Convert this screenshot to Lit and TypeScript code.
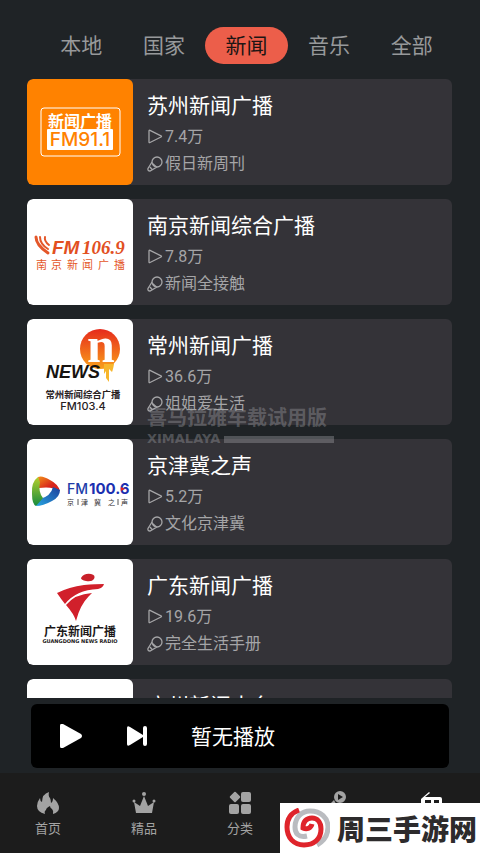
import { LitElement, html, css, svg, nothing, type TemplateResult } from "lit";
import { customElement, state } from "lit/decorators.js";
import { classMap } from "lit/directives/class-map.js";

interface Station {
  name: string;
  plays?: string;
  show?: string;
  logo: string;
}

const TABS = ["本地", "国家", "新闻", "音乐", "全部"];

const STATIONS: Station[] = [
  { name: "苏州新闻广播", plays: "7.4万", show: "假日新周刊", logo: "suzhou" },
  { name: "南京新闻综合广播", plays: "7.8万", show: "新闻全接触", logo: "nanjing" },
  { name: "常州新闻广播", plays: "36.6万", show: "姐姐爱生活", logo: "changzhou" },
  { name: "京津冀之声", plays: "5.2万", show: "文化京津冀", logo: "jingjinji" },
  { name: "广东新闻广播", plays: "19.6万", show: "完全生活手册", logo: "guangdong" },
  { name: "广州新闻电台", logo: "blank" },
];

const LOGOS: Record<string, TemplateResult> = {
  suzhou: svg`
    <rect width="106" height="106" fill="#ff8200"/>
    <rect x="14" y="29" width="79" height="48" rx="3" fill="none" stroke="#fff"/>
    <text class="cjk heavy" x="53" y="48" font-size="16" text-anchor="middle" fill="#fff">新闻广播</text>
    <rect x="20" y="50" width="66" height="21" rx="1" fill="#fff"/>
    <text class="inter medium" x="53" y="67" font-size="19" text-anchor="middle" fill="#ff8200">FM91.1</text>`,
  nanjing: svg`
    <rect width="106" height="106" fill="#fff"/>
    <g fill="none" stroke="#e4572a" stroke-linecap="round">
      <path d="M9 38q0 8 12 16" stroke-width="3"/>
      <path d="M13 38q0 7 8 12" stroke-width="2"/>
      <path d="M18 38q-1 4 4 8" stroke-width="2"/>
    </g>
    <text class="sans heavy italic" x="25" y="55" font-size="19" fill="#e2501f">FM</text>
    <text class="serif heavy italic" x="55" y="55" font-size="19" fill="#e2501f">106.9</text>
    <text class="cjk" y="70" font-size="11" fill="#e4572a"><tspan x="9">南</tspan><tspan x="24">京</tspan><tspan x="40">新</tspan><tspan x="55">闻</tspan><tspan x="71">广</tspan><tspan x="87">播</tspan></text>`,
  changzhou: svg`
    <defs>
      <linearGradient id="sun" x1="0" y1="0" x2="0" y2="1">
        <stop offset="0" stop-color="#e62a1c"/><stop offset="1" stop-color="#f9a01b"/>
      </linearGradient>
    </defs>
    <rect width="106" height="106" fill="#fff"/>
    <circle cx="73" cy="30" r="20" fill="url(#sun)"/>
    <text class="serif heavy" x="60" y="43" font-size="50" fill="#fff">n</text>
    <path d="M77 45h10q-1 6-2 8l-3-3v13l-3-4v-7l-2 3z" fill="#f7b62c"/>
    <text class="sans heavy italic" x="19" y="59" font-size="18" fill="#171310">NEWS</text>
    <text class="cjk heavy" x="56" y="79" font-size="9.400" text-anchor="middle" fill="#27211f">常州新闻综合广播</text>
    <text class="inter medium" x="56" y="91" font-size="11" text-anchor="middle" fill="#27211f">FM103.4</text>`,
  jingjinji: svg`
    <defs>
      <linearGradient id="tri-red" x1="0" y1="0" x2="1" y2="1">
        <stop offset="0" stop-color="#f29018"/><stop offset=".6" stop-color="#d8251c"/>
      </linearGradient>
      <linearGradient id="tri-blue" x1="1" y1="0" x2="0" y2="1">
        <stop offset="0" stop-color="#1c3f9c"/><stop offset="1" stop-color="#27a5e0"/>
      </linearGradient>
      <linearGradient id="tri-green" x1="0" y1="0" x2="0" y2="1">
        <stop offset="0" stop-color="#b4cf2c"/><stop offset="1" stop-color="#168a3d"/>
      </linearGradient>
    </defs>
    <rect width="106" height="106" fill="#fff"/>
    <path d="M11 38q4-2 12 3 8 4 10 11-8-5-21-3z" fill="url(#tri-red)"/>
    <path d="M33 51q0 7-8 11-9 5-16 5l4-7q11-3 13-12z" fill="url(#tri-blue)"/>
    <path d="M11 38q-7 5-6 17 0 10 4 12l7-8q-5-6-3-16z" fill="url(#tri-green)"/>
    <text class="inter medium" x="40" y="55" font-size="14" fill="#203ba8">FM</text>
    <text class="inter heavy" x="62" y="55" font-size="15" fill="#1b2fb0">100.6</text>
    <path d="M94 48v4l4-2z" fill="#e5251c"/>
    <text class="cjk" y="66" font-size="7" fill="#333"><tspan x="40">京</tspan><tspan x="54">津</tspan><tspan x="67">冀</tspan><tspan x="81">之</tspan><tspan x="94">声</tspan></text>
    <path d="M51 60v6M91 60v6" stroke="#555"/>`,
  guangdong: svg`
    <rect width="106" height="106" fill="#fff"/>
    <path d="M54 19q3-5 10-4 5 1 3 5-2 3-8 2-5-1-5-3z" fill="#c8202a"/>
    <path d="M30 34q12-6 27-8 12-1 20-1-1 4-6 5-22 1-33 15-4-5-8-11z" fill="#d1202b"/>
    <path d="M39 46q9-11 26-12l-3 3q-9 9-13 25-2-7-10-16z" fill="#d1202b"/>
    <text class="cjk heavy" x="53" y="77" font-size="12" text-anchor="middle" fill="#1b1717">广东新闻广播</text>
    <text class="dejavu heavy" x="53" y="84" font-size="5" text-anchor="middle" fill="#1b1717">GUANGDONG NEWS RADIO</text>`,
  blank: svg`<rect width="106" height="106" fill="#fff"/>`,
};

const playsIcon = html`<svg class="meta-icon" viewBox="0 0 16 16" aria-hidden="true">
  <path d="M2 2v11q0 1 1 .5l11-5.500q1-.6 0-1.200L3 1.300q-1-.4-1 .7z"/>
</svg>`;

const micIcon = html`<svg class="meta-icon" viewBox="0 0 16 16" aria-hidden="true">
  <circle cx="10" cy="6" r="5"/>
  <path d="M5 6l-4 6.500q-.6 2.500 2 2.500l7-4M5.500 7.500l4 3.500M3 11l2 2.500"/>
</svg>`;

const NAV: { label: string; icon: TemplateResult; iconOnly?: boolean; active?: boolean }[] = [
  {
    label: "首页",
    icon: svg`<path d="M13 1q-1 4 1 6 1 2 1 5 2-1 2-5 6 5 6 10 0 4-6 6 1-3-1-5-2-1-2-3-4 2-4 4-2 1-1 4-8-2-8-8 0-4 3-8 0 3 2 4 0-8 7-10z"/>`,
  },
  {
    label: "精品",
    icon: svg`<circle cx="12" cy="3" r="2"/><circle cx="2" cy="10" r="1.500"/><circle cx="22" cy="10" r="1.500"/>
      <path d="M2 11l6 4 4-10 4 10 6-4-2 11H4z"/>`,
  },
  {
    label: "分类",
    icon: svg`<rect x="3" y="2" width="8" height="8" rx="1" transform="rotate(45 7 6)"/>
      <rect x="13" y="1" width="10" height="10" rx="2"/><rect x="1" y="13" width="10" height="10" rx="2"/>
      <rect x="13" y="13" width="10" height="10" rx="2"/>`,
  },
  {
    label: "我的",
    iconOnly: true,
    icon: svg`<path fill-rule="evenodd" d="M16 0a6 6 0 1 0 0 12a6 6 0 1 0 0-12zM14 3l5 3-5 3z"/>
      <path d="M3 16l7-7 2 4v9H5z"/>`,
  },
  {
    label: "广播",
    iconOnly: true,
    active: true,
    icon: svg`<path d="M1 8L9 1l1 1-5 4h15q2 0 2 2v13q0 2-2 2H3q-2 0-2-2z"/>
      <path d="M5 9h6v3H5zM14 9h5v3h-5z" fill="#1c1c1c"/>`,
  },
];

@customElement("station-card")
class StationCard extends LitElement {
  static properties = { station: { attribute: false } };
  declare station: Station;

  static styles = css`
    :host {
      display: flex;
      flex: none;
      height: 106px;
      border-radius: 6px;
      overflow: hidden;
      background: #343338;
    }
    .cover {
      flex: none;
      width: 106px;
      height: 106px;
      border-radius: 6px;
    }
    .cjk { font-family: "Noto Sans CJK SC", sans-serif; }
    .sans { font-family: "Liberation Sans", sans-serif; }
    .serif { font-family: "Liberation Serif", serif; }
    .inter { font-family: Inter, sans-serif; }
    .dejavu { font-family: "DejaVu Sans", sans-serif; }
    .heavy { font-weight: 700; }
    .medium { font-weight: 500; }
    .italic { font-style: italic; }
    .info {
      min-width: 0;
      padding: 11px 14px 0;
    }
    .name {
      margin: 0 0 1px;
      font-size: 21px;
      line-height: 32px;
      font-weight: 400;
      color: #fff;
      white-space: nowrap;
    }
    .meta {
      display: flex;
      align-items: center;
      gap: 2px;
      margin: 0;
      font-size: 16px;
      line-height: 27px;
      color: #a5a5a7;
      white-space: nowrap;
    }
    .meta-icon {
      width: 16px;
      height: 16px;
      fill: none;
      stroke: #a5a5a7;
      stroke-width: 1.3;
    }
  `;

  render() {
    const s = this.station;
    return html`
      <svg class="cover" viewBox="0 0 106 106" role="img" aria-label=${s.name}>${LOGOS[s.logo]}</svg>
      <div class="info">
        <h2 class="name">${s.name}</h2>
        ${s.plays ? html`<p class="meta">${playsIcon}<span>${s.plays}</span></p>` : nothing}
        ${s.show ? html`<p class="meta">${micIcon}<span>${s.show}</span></p>` : nothing}
      </div>
    `;
  }
}

@customElement("app-root")
class AppRoot extends LitElement {
  @state() private tab = 2;

  static styles = css`
    :host {
      position: relative;
      display: flex;
      flex-direction: column;
      height: 100vh;
      overflow: hidden;
      background: #1f2326;
      font-family: Roboto, "Noto Sans CJK SC", sans-serif;
    }
    button {
      border: 0;
      padding: 0;
      background: none;
      color: inherit;
      font: inherit;
      cursor: pointer;
    }
    .tabs {
      display: grid;
      grid-template-columns: repeat(5, 1fr);
      padding: 27px 27px 15px 40px;
    }
    .tab {
      height: 37px;
      padding-top: 2px;
      border-radius: 19px;
      font-size: 21px;
      line-height: 35px;
      color: #97999b;
    }
    .tab.active {
      background: #ec5e4a;
      color: #1d1514;
    }
    .list {
      flex: 1;
      min-height: 0;
      display: flex;
      flex-direction: column;
      gap: 14px;
      padding: 0 28px 0 27px;
      overflow: hidden;
    }
    .player {
      display: flex;
      align-items: center;
      height: 64px;
      margin: 6px 31px 5px;
      border-radius: 6px;
      background: #000;
      color: #fff;
    }
    .control {
      display: flex;
      margin-left: 28px;
    }
    .control + .control {
      margin-left: 42px;
    }
    .control svg {
      width: 24px;
      height: 24px;
      fill: #fff;
    }
    .track {
      margin-left: 42px;
      padding-top: 2px;
      font-size: 21px;
      line-height: 32px;
    }
    .nav {
      display: grid;
      grid-template-columns: repeat(5, 1fr);
      height: 80px;
      background: #1c1c1c;
    }
    .nav-item {
      display: flex;
      flex-direction: column;
      align-items: center;
      gap: 4px;
      padding-top: 18px;
      font-size: 13px;
      line-height: 20px;
      color: #a3a3a3;
      text-decoration: none;
    }
    .nav-item.active {
      color: #fff;
    }
    .nav-item svg {
      width: 24px;
      height: 24px;
      fill: currentColor;
    }
    .trial {
      position: absolute;
      top: 404px;
      left: 147px;
      width: 187px;
      color: rgba(170, 170, 175, 0.36);
      font-weight: 700;
      pointer-events: none;
    }
    .trial-name {
      font-size: 20px;
      line-height: 28px;
      white-space: nowrap;
    }
    .trial-brand {
      display: flex;
      align-items: center;
      gap: 4px;
      font: 700 13px/14px "DejaVu Sans", sans-serif;
    }
    .trial-bar {
      flex: 1;
      height: 7px;
      background: currentColor;
    }
    .site {
      position: absolute;
      right: 0;
      bottom: 0;
      display: flex;
      align-items: center;
      gap: 7px;
      box-sizing: border-box;
      width: 200px;
      height: 50px;
      padding-left: 4px;
      background: #fff;
      color: #2d2b2c;
      font: 900 28px/48px "Noto Sans CJK SC", sans-serif;
      white-space: nowrap;
    }
    .site svg {
      flex: none;
      width: 46px;
      height: 40px;
      fill: none;
      stroke-width: 5;
    }
  `;

  render() {
    return html`
      <nav class="tabs" aria-label="电台分类">
        ${TABS.map(
          (t, i) => html`<button
            class=${classMap({ tab: true, active: i === this.tab })}
            @click=${() => (this.tab = i)}
          >${t}</button>`
        )}
      </nav>
      <main class="list">
        ${STATIONS.map((s) => html`<station-card .station=${s}></station-card>`)}
      </main>
      <section class="player">
        <button class="control" aria-label="播放">
          <svg viewBox="0 0 24 24"><path d="M1 2q0-3 3-2l18 10q2 2 0 4L4 24q-3 1-3-2z"/></svg>
        </button>
        <button class="control" aria-label="下一首">
          <svg viewBox="0 0 24 24"><path d="M2 4q0-3 3-1l13 8V4q0-2 2-2t2 2v16q0 2-2 2t-2-2v-7L5 21q-3 2-3-1z"/></svg>
        </button>
        <span class="track">暂无播放</span>
      </section>
      <nav class="nav" aria-label="主导航">
        ${NAV.map(
          (n) => html`<a
            class=${classMap({ "nav-item": true, active: !!n.active })}
            href="#"
            aria-label=${n.label}
          >
            <svg viewBox="0 0 24 24" aria-hidden="true">${n.icon}</svg>
            ${n.iconOnly ? nothing : html`<span>${n.label}</span>`}
          </a>`
        )}
      </nav>
      <div class="trial">
        <div class="trial-name">喜马拉雅车载试用版</div>
        <div class="trial-brand"><span>XIMALAYA</span><span class="trial-bar"></span></div>
      </div>
      <div class="site">
        <svg viewBox="0 0 46 40" aria-hidden="true">
          <path d="M23 28C14 30 11 25 11 19 11 9 18 3 26 3 37 3 44 10 44 19 44 27 40 33 33 37" stroke="#babcc0"/>
          <path d="M15 2C7 5 3 11 3 19 3 30 10 37 20 37 30 37 37 31 37 21 37 14 33 10 28 10 22 10 19 14 19 20 23 22 27 20 28 16" stroke="#df242b"/>
        </svg>
        <span>周三手游网</span>
      </div>
    `;
  }
}
